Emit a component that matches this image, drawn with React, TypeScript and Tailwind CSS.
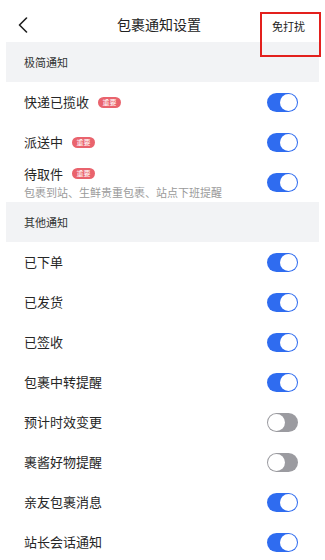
import React from "react";

type Item = {
    label: string;
    on: boolean;
    badge?: boolean;
    sub?: string;
};

const simple: Item[] = [
    { label: "快递已揽收", on: true, badge: true },
    { label: "派送中", on: true, badge: true },
    { label: "待取件", on: true, badge: true, sub: "包裹到站、生鲜贵重包裹、站点下班提醒" },
];

const others: Item[] = [
    { label: "已下单", on: true },
    { label: "已发货", on: true },
    { label: "已签收", on: true },
    { label: "包裹中转提醒", on: true },
    { label: "预计时效变更", on: false },
    { label: "裹酱好物提醒", on: false },
    { label: "亲友包裹消息", on: true },
    { label: "站长会话通知", on: true },
];

function Toggle({ on }: { on: boolean }) {
    return (
        <div
            className={
                on
                    ? "w-[31px] h-[19px] rounded-full bg-[#2f6cf0] flex items-center justify-end px-[1px]"
                    : "w-[31px] h-[19px] rounded-full bg-[#9b9ba0] flex items-center justify-start px-[1px]"
            }
        >
            <div className="w-[17px] h-[17px] rounded-full bg-white" />
        </div>
    );
}

function Badge() {
    return (
        <span className="ml-[9px] inline-flex items-center justify-center w-[23px] h-[11px] rounded-full bg-[#e9636d] text-white text-[7px] leading-none">
            重要
        </span>
    );
}

function Row({ item }: { item: Item }) {
    return (
        <div className="h-[40px] flex items-center justify-between pl-[24px] pr-[27px]">
            <div className="flex flex-col">
                <div className="flex items-center text-[13px] leading-[18px] text-[#262626]">
                    {item.label}
                    {item.badge && <Badge />}
                </div>
                {item.sub && (
                    <div className="text-[11px] leading-[16px] text-[#9a9a9a] mt-[1px]">{item.sub}</div>
                )}
            </div>
            <Toggle on={item.on} />
        </div>
    );
}

function SectionTitle({ title }: { title: string }) {
    return (
        <div className="mx-[6px] h-[40px] bg-[#f2f3f5] flex items-center pl-[18px] text-[11px] text-[#333]">
            {title}
        </div>
    );
}

export default function App() {
    return (
        <div
            className="relative w-[325px] h-[560px] bg-white overflow-hidden"
            style={{ fontFamily: '"Noto Sans CJK SC", "Noto Sans", sans-serif' }}
        >
            {/* header */}
            <div className="h-[42px] pt-[7px] flex items-center justify-between pl-[18px] pr-[20px]">
                <svg width="10" height="16" viewBox="0 0 10 16" fill="none">
                    <path d="M8.5 1 L1.5 8 L8.5 15" stroke="#1f1f1f" strokeWidth="1.6" strokeLinecap="round" strokeLinejoin="round" />
                </svg>
                <div className="text-[14px] text-[#222] pl-[18px]">包裹通知设置</div>
                <div className="text-[11px] text-[#222] pt-[3px]">免打扰</div>
            </div>
            {/* annotation box */}
            <div className="absolute left-[260px] top-[12px] w-[61px] h-[45px] border-2 border-[#e3201d]" />

            <SectionTitle title="极简通知" />
            {simple.map((it) => (
                <Row key={it.label} item={it} />
            ))}
            <SectionTitle title="其他通知" />
            {others.map((it) => (
                <Row key={it.label} item={it} />
            ))}
        </div>
    );
}
